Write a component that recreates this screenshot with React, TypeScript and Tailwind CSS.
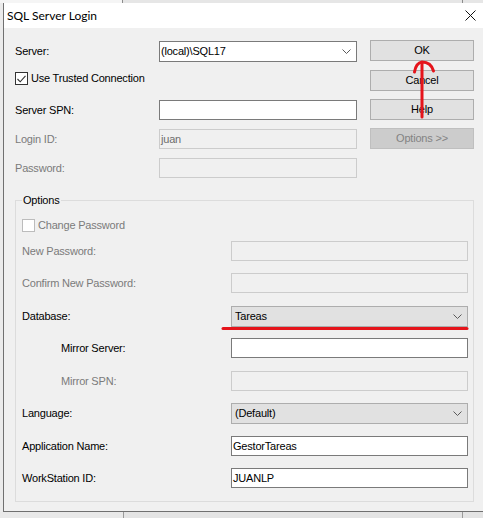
import React from 'react';

const txt = "font-['Microsoft_Sans_Serif','Liberation_Sans',Arial,sans-serif] text-[11px] tracking-[-0.2px] leading-[13px]";

const Chevron = () => (
   <svg width="9" height="5" viewBox="0 0 9 5" className="shrink-0">
      <path d="M0.5 0.5 L4.5 4.5 L8.5 0.5" fill="none" stroke="#5a5a5a" strokeWidth="1" />
   </svg>
);

const TextBox = ({ value = '', disabled = false, w }: { value?: string; disabled?: boolean; w: string }) => (
   <div
      className={`${w} h-[20px] border flex items-center pl-[1px] ${
         disabled ? 'border-[#cccccc] bg-[#f0f0f0] text-[#6d6d6d]' : 'border-[#7a7a7a] bg-white text-black'
      }`}
   >
      {value}
   </div>
);

const DropList = ({ value }: { value: string }) => (
   <div className="w-[237px] h-[21px] border border-[#adadad] bg-[#e1e1e1] flex items-center justify-between pl-[3px] pr-[5px] text-black">
      <span>{value}</span>
      <Chevron />
   </div>
);

const Button = ({ label, disabled = false, mt }: { label: string; disabled?: boolean; mt: string }) => (
   <div
      className={`${mt} h-[21px] w-[104px] border flex items-center justify-center ${
         disabled ? 'border-[#bfbfbf] bg-[#cccccc] text-[#838383]' : 'border-[#adadad] bg-[#e1e1e1] text-black'
      }`}
   >
      {label}
   </div>
);

const Label = ({ children, disabled = false, w }: { children: React.ReactNode; disabled?: boolean; w: string }) => (
   <span className={`${w} shrink-0 ${disabled ? 'text-[#7b7b7b]' : 'text-black'}`}>{children}</span>
);

const App = () => {
   return (
      <div className={`relative w-[483px] h-[518px] overflow-hidden bg-[#ebebeb] ${txt}`}>
         <div className="h-[3px] flex">
            <div className="w-[122px] bg-[#f5f5f5]" />
            <div className="w-px bg-[#8c8c8c]" />
            <div className="w-[339px] bg-[#e6e6e6]" />
            <div className="w-px bg-[#8c8c8c]" />
            <div className="flex-1 bg-[#e6e6e6]" />
         </div>

         <div className="ml-[3px] w-[490px] h-[509px] border-l border-b border-[#707070] bg-[#f0f0f0] flex flex-col">
            <div className="h-[25px] bg-white flex items-center shrink-0">
               <span className="pl-[3px] font-['Segoe_UI',Lato,sans-serif] text-[12px] tracking-normal text-black">
                  SQL Server Login
               </span>
               <div className="ml-auto w-[45px] h-full flex items-center justify-center">
                  <svg width="11" height="11" viewBox="0 0 11 11">
                     <path d="M0.5 0.5 L10.5 10.5 M10.5 0.5 L0.5 10.5" stroke="#111" strokeWidth="1" />
                  </svg>
               </div>
            </div>

            <div className="pl-[11px] flex flex-col">
               <div className="flex gap-[13px]">
                  <div className="w-[342px] pt-[13px] flex flex-col">
                     <div className="h-[21px] flex items-center">
                        <Label w="w-[144px]">Server:</Label>
                        <div className="w-[198px] h-[21px] border border-[#7a7a7a] bg-white flex items-center justify-between pl-[1px] pr-[5px]">
                           <span>(local)\SQL17</span>
                           <Chevron />
                        </div>
                     </div>
                     <div className="mt-[10px] h-[13px] flex items-center gap-[3px]">
                        <div className="w-[13px] h-[13px] border border-[#333333] bg-white flex items-center justify-center">
                           <svg width="9" height="8" viewBox="0 0 9 8">
                              <path d="M0.5 4 L3.2 6.8 L8.5 0.8" fill="none" stroke="#333" strokeWidth="1.1" />
                           </svg>
                        </div>
                        <span className="text-black">Use Trusted Connection</span>
                     </div>
                     <div className="mt-[15px] h-[20px] flex items-center">
                        <Label w="w-[144px]">Server SPN:</Label>
                        <TextBox w="w-[198px]" />
                     </div>
                     <div className="mt-[9px] h-[20px] flex items-center">
                        <Label w="w-[144px]" disabled>
                           Login ID:
                        </Label>
                        <TextBox w="w-[198px]" value="juan" disabled />
                     </div>
                     <div className="mt-[9px] h-[20px] flex items-center">
                        <Label w="w-[144px]" disabled>
                           Password:
                        </Label>
                        <TextBox w="w-[198px]" disabled />
                     </div>
                  </div>
                  <div className="pt-[12px] flex flex-col">
                     <Button label="OK" mt="mt-0" />
                     <Button label="Cancel" mt="mt-[9px]" />
                     <Button label="Help" mt="mt-[8px]" />
                     <Button label="Options >>" mt="mt-[8px]" disabled />
                  </div>
               </div>

               <div className="relative mt-[22px] w-[459px] h-[302px] border border-[#dcdcdc] pl-[6px] flex flex-col">
                  <span className="absolute left-[6px] -top-[7px] px-[1px] bg-[#f0f0f0] text-black">Options</span>

                  <div className="mt-[18px] h-[13px] flex items-center gap-[3px]">
                     <div className="w-[13px] h-[13px] border border-[#bcbcbc] bg-white" />
                     <span className="text-[#7b7b7b]">Change Password</span>
                  </div>
                  <div className="mt-[9px] h-[20px] flex items-center">
                     <Label w="w-[209px]" disabled>
                        New Password:
                     </Label>
                     <TextBox w="w-[237px]" disabled />
                  </div>
                  <div className="mt-[12px] h-[20px] flex items-center">
                     <Label w="w-[209px]" disabled>
                        Confirm New Password:
                     </Label>
                     <TextBox w="w-[237px]" disabled />
                  </div>
                  <div className="mt-[13px] h-[21px] flex items-center">
                     <Label w="w-[209px]">Database:</Label>
                     <DropList value="Tareas" />
                  </div>
                  <div className="mt-[11px] h-[20px] flex items-center">
                     <Label w="w-[209px]">
                        <span className="pl-[39px]">Mirror Server:</span>
                     </Label>
                     <TextBox w="w-[237px]" />
                  </div>
                  <div className="mt-[13px] h-[20px] flex items-center">
                     <Label w="w-[209px]" disabled>
                        <span className="pl-[39px]">Mirror SPN:</span>
                     </Label>
                     <TextBox w="w-[237px]" disabled />
                  </div>
                  <div className="mt-[12px] h-[21px] flex items-center">
                     <Label w="w-[209px]">Language:</Label>
                     <DropList value="(Default)" />
                  </div>
                  <div className="mt-[12px] h-[20px] flex items-center">
                     <Label w="w-[209px]">Application Name:</Label>
                     <TextBox w="w-[237px]" value="GestorTareas" />
                  </div>
                  <div className="mt-[12px] h-[20px] flex items-center">
                     <Label w="w-[209px]">WorkStation ID:</Label>
                     <TextBox w="w-[237px]" value="JUANLP" />
                  </div>
               </div>
            </div>
         </div>

         <div className="absolute left-0 top-[512px] w-full h-[6px] flex">
            <div className="w-[123px] bg-[#e9e9e9]" />
            <div className="w-px bg-[#9a9a9a]" />
            <div className="w-[338px] bg-[#e4e4e4]" />
            <div className="w-px bg-[#9a9a9a]" />
            <div className="flex-1 bg-[#e4e4e4]" />
         </div>

         <svg className="absolute left-0 top-0 pointer-events-none" width="483" height="518" viewBox="0 0 483 518">
            <path d="M223 328.5 L467 328.5" stroke="#e5141b" strokeWidth="3" strokeLinecap="round" />
            <path d="M422 63 L422 117" stroke="#e5141b" strokeWidth="3" strokeLinecap="round" />
            <path d="M414.5 72 Q416 63 422 62 Q431 62 433.5 71" fill="none" stroke="#e5141b" strokeWidth="3" strokeLinecap="round" />
         </svg>
      </div>
   );
};

export default App;
